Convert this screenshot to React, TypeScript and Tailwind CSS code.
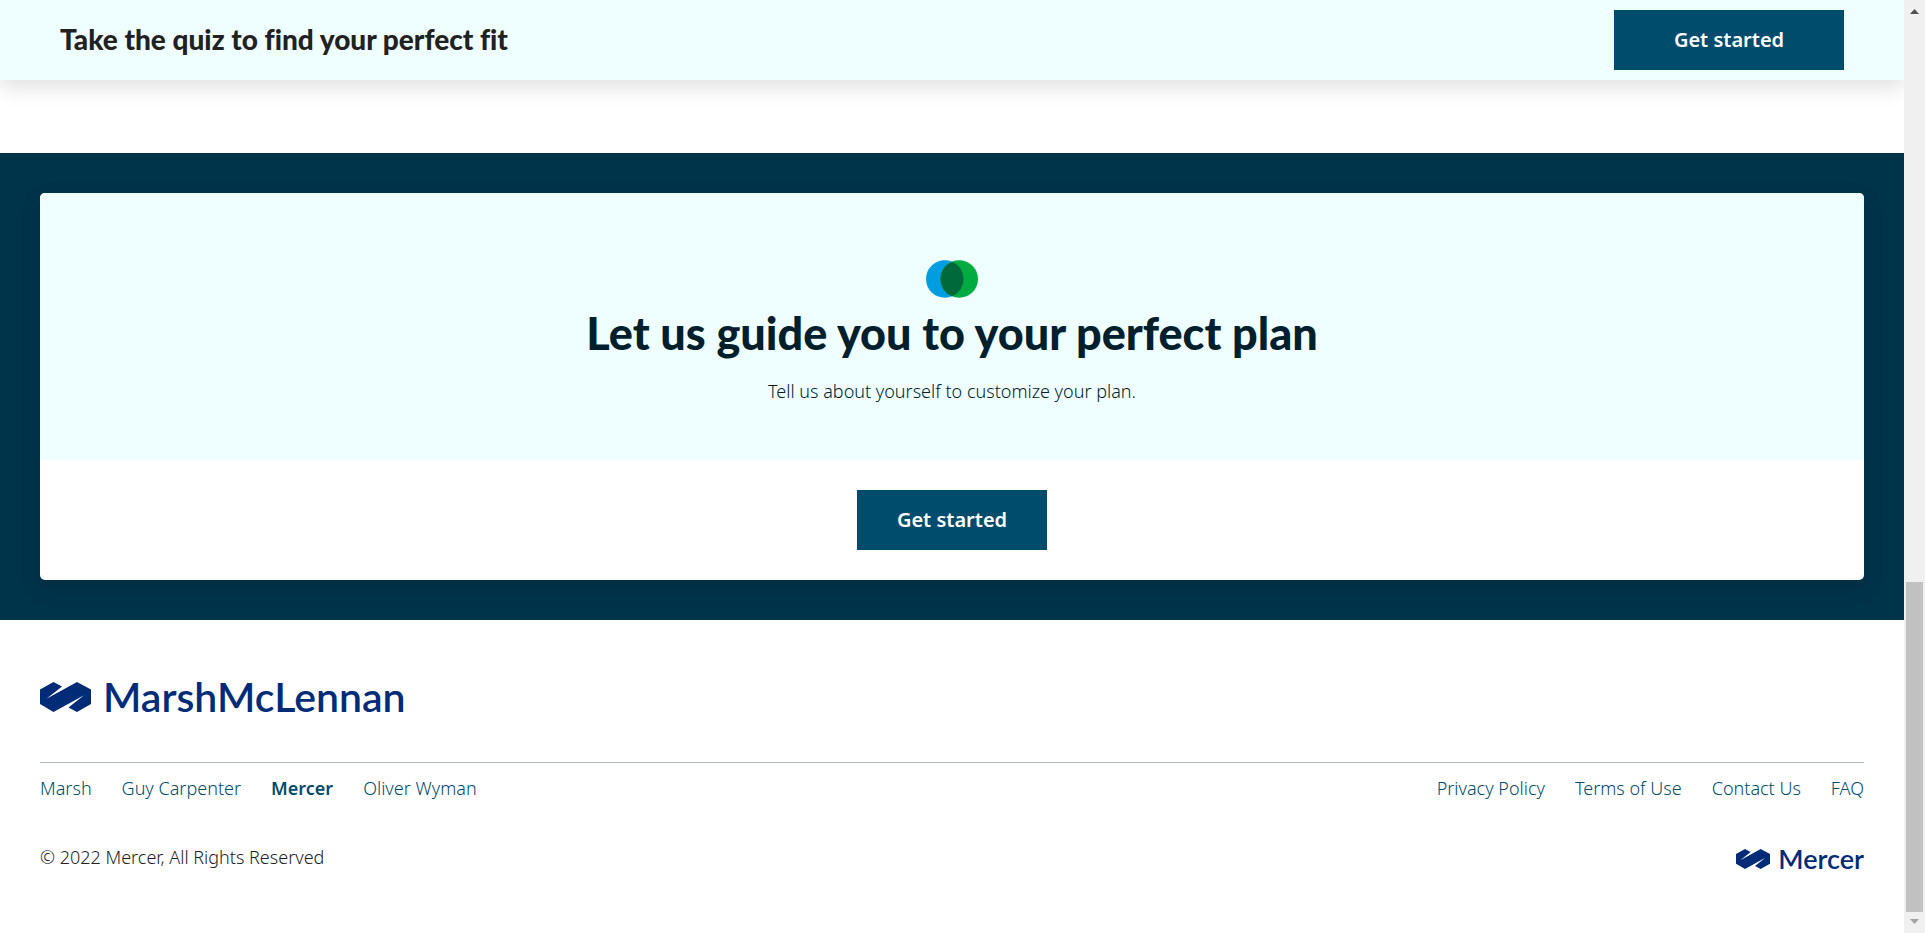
const BRAND_LINKS = ['Marsh', 'Guy Carpenter', 'Mercer', 'Oliver Wyman'];
const LEGAL_LINKS = ['Privacy Policy', 'Terms of Use', 'Contact Us', 'FAQ'];

function BrandMark({ className }: { className: string }) {
  return (
    <svg viewBox="0 0 51 30" className={className} fill="#002c77" aria-hidden="true">
      <path d="M13.5 0 22 4.6 6.5 16.8 37 0 51 7.6V22L37 30 28.5 25.4 44 13.2 13.5 30 0 22V7.6Z" />
    </svg>
  );
}

function OverlapMark() {
  return (
    <svg viewBox="0 0 52 38" className="h-[38px] w-[52px]" aria-hidden="true">
      <circle cx="18.8" cy="19" r="18.8" fill="#009de0" />
      <circle cx="33.2" cy="19" r="18.8" fill="#00ac41" />
      <path d="M26 1.63A18.8 18.8 0 0 1 26 36.37A18.8 18.8 0 0 1 26 1.63Z" fill="#00693c" />
    </svg>
  );
}

function ScrollTrack() {
  return (
    <div className="flex w-[21px] shrink-0 flex-col items-center bg-[#f0f0f0]" aria-hidden="true">
      <svg viewBox="0 0 9 5" className="mt-[9px] h-[5px] w-[9px]" fill="#505050"><path d="M4.5 0 9 5H0Z" /></svg>
      <div className="mt-auto mb-[7px] h-[330px] w-[17px] bg-[#c1c1c1]" />
      <svg viewBox="0 0 9 5" className="mb-[9px] h-[5px] w-[9px]" fill="#a3a3a3"><path d="M4.5 5 9 0H0Z" /></svg>
    </div>
  );
}

export default function App() {
  return (
    <div className="flex min-h-screen bg-white font-['Noto_Sans',sans-serif] text-lg font-[330] text-[#222]">
      <div className="min-w-0 flex-1">
        <header className="flex h-20 items-center justify-between bg-[#effeff] px-[60px] shadow-[0_8px_20px_rgba(0,0,0,0.12)]">
          <p className="pb-0.5 font-[Lato,sans-serif] text-[28px] leading-8 font-black text-[#212121] [font-variant-ligatures:none]">Take the quiz to find your perfect fit</p>
          <button type="button" className="h-[60px] w-[230px] bg-[#004c6c] text-xl font-semibold text-white">Get started</button>
        </header>
        <main className="mt-[73px] bg-[#00344b] p-10">
          <section className="overflow-hidden rounded-[5px] bg-white shadow-[0_8px_20px_rgba(0,0,0,0.15)]">
            <div className="flex h-[267px] flex-col items-center bg-[#effeff] pt-[67px]">
              <OverlapMark />
              <h1 className="mt-2 font-[Lato,sans-serif] text-[45px] leading-[54px] font-black text-[#001f2d]">Let us guide you to your perfect plan</h1>
              <p className="mt-[17px] leading-7 text-[#001f2d]">Tell us about yourself to customize your plan.</p>
            </div>
            <div className="flex justify-center py-[30px]">
              <button type="button" className="h-[60px] w-[190px] bg-[#004c6c] text-xl font-semibold text-white">Get started</button>
            </div>
          </section>
        </main>
        <footer className="px-10 pt-14">
          <div className="flex h-[42px] items-center gap-3 text-[#002c77]">
            <BrandMark className="h-[30px] w-[51px]" />
            <span className="font-[Lato,sans-serif] text-[41px] leading-10 font-semibold">MarshMcLennan</span>
          </div>
          <div className="mt-11 flex justify-between border-t border-[#b2bfc5] pt-[11px] leading-7 text-[#004c6c]">
            <nav aria-label="Companies" className="flex gap-[30px]">
              {BRAND_LINKS.map((name) => (
                <a key={name} href="#" className={name === 'Mercer' ? 'font-semibold' : ''}>{name}</a>
              ))}
            </nav>
            <nav aria-label="Legal" className="flex gap-[30px]">
              {LEGAL_LINKS.map((name) => <a key={name} href="#">{name}</a>)}
            </nav>
          </div>
          <div className="mt-[41px] flex items-start justify-between">
            <p className="leading-7">© 2022 Mercer, All Rights Reserved</p>
            <div className="flex items-center gap-2 text-[#002c77]">
              <BrandMark className="h-5 w-[34px]" />
              <span className="font-[Lato,sans-serif] text-[27px] leading-8 font-semibold">Mercer</span>
            </div>
          </div>
        </footer>
      </div>
      <ScrollTrack />
    </div>
  );
}
